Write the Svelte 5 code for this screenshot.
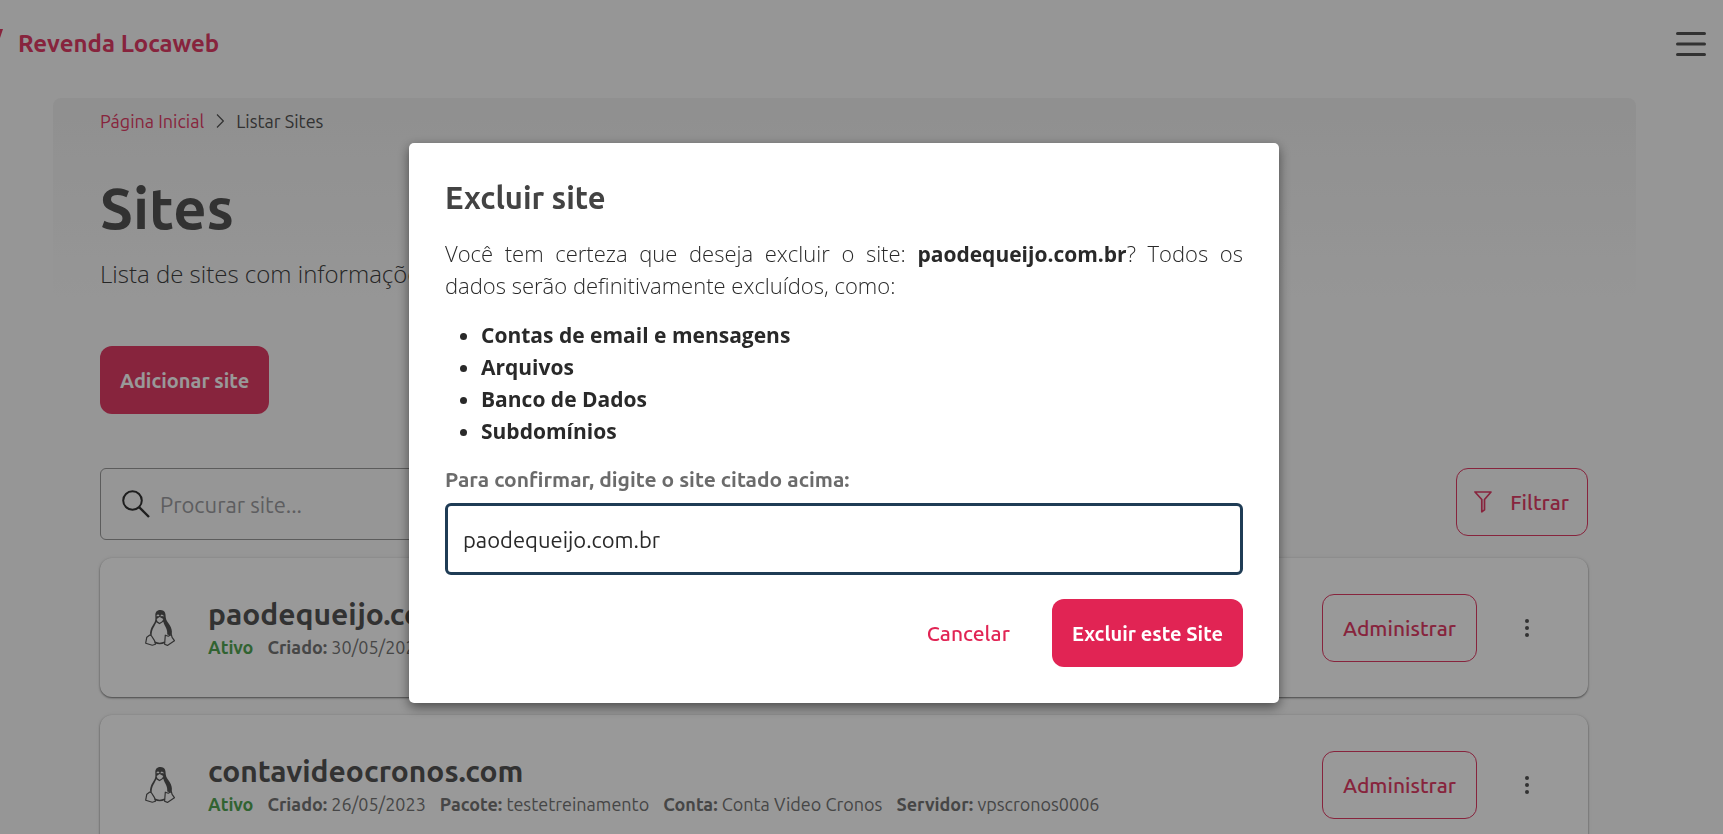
<script>
	let search = '';
	let confirmation = 'paodequeijo.com.br';
	let site_to_delete = 'paodequeijo.com.br';

	const deleted_items = ['Contas de email e mensagens', 'Arquivos', 'Banco de Dados', 'Subdomínios'];

	const sites = [
		{
			domain: 'paodequeijo.com.br',
			status: 'Ativo',
			info: [['Criado', '30/05/2023']]
		},
		{
			domain: 'contavideocronos.com',
			status: 'Ativo',
			info: [
				['Criado', '26/05/2023'],
				['Pacote', 'testetreinamento'],
				['Conta', 'Conta Video Cronos'],
				['Servidor', 'vpscronos0006']
			]
		}
	];
</script>

<div class="page">
	<header>
		<a class="brand" href="#home">
			<svg width="3" height="20" viewBox="0 0 3 20" aria-hidden="true">
				<path d="M0 0h3L0 9z" fill="currentColor" />
			</svg>
			<span>Revenda Locaweb</span>
		</a>
		<button class="menu" aria-label="Menu">
			<svg width="30" height="24" viewBox="0 0 30 24" aria-hidden="true">
				<path d="M1.5 1.5h27M1.5 12h27M1.5 22.500h27" stroke="currentColor" stroke-width="3" stroke-linecap="round" />
			</svg>
		</button>
	</header>

	<main>
		<nav class="breadcrumb" aria-label="breadcrumb">
			<a href="#home">Página Inicial</a>
			<svg width="8" height="14" viewBox="0 0 8 14" aria-hidden="true">
				<path d="M1 .5 7.300 7 1 13.500" fill="none" stroke="currentColor" stroke-width="1.200" />
			</svg>
			<span>Listar Sites</span>
		</nav>

		<h1>Sites</h1>
		<p class="subtitle">Lista de sites com informações</p>

		<button class="btn primary">Adicionar site</button>

		<div class="toolbar">
			<label class="search">
				<svg width="28" height="28" viewBox="0 0 28 28" aria-hidden="true">
					<g fill="none" stroke="currentColor" stroke-width="2">
						<circle cx="10.500" cy="10.500" r="9.300" />
						<path d="m17 17 10 10" stroke-width="2.400" />
					</g>
				</svg>
				<input type="text" placeholder="Procurar site..." aria-label="Procurar site" bind:value={search} />
			</label>
			<button class="btn outline filter">
				<svg width="18" height="22" viewBox="0 0 18 22" aria-hidden="true">
					<path d="M1 1h16l-6.500 7.500v10.300L7.800 20.800V8.500z" fill="none" stroke="currentColor" stroke-width="1.700" stroke-linejoin="round" />
				</svg>
				Filtrar
			</button>
		</div>

		{#each sites as site}
			<article class="card">
				<svg class="tux" width="30" height="36" viewBox="0 0 30 36" aria-hidden="true">
					<path
						d="M15.300 0C11.700 0 10.200 2.300 10.300 5.600c.1 2.700.3 4.500-.6 6.500-1.100 2.400-3.300 5-4.200 8.100-.5 1.700-.6 3-.4 4.500l1.600.9c-.1-3.400.6-5.800 1.900-8.200 1.300-2.300 2.100-3.600 2.600-5.200l3.300 2 3.800-2.400c.6 2.600 2 4.200 3 6.700.8 2.100 1.100 4 .9 6l2.500.7 2.100-1.200c.5-3.500-.4-6-2-8.800-1.700-3-3.700-4.500-4-7.400C20.500 4.300 20.700 0 15.300 0z"
						fill="currentColor"
					/>
					<path d="M12 6.200c.1-1.300 1.600-1.500 1.900 0M16 6.200c.2-1.500 2.200-1.300 2.100.2" fill="none" stroke="#fff" stroke-width="1.100" />
					<path d="m11.700 9 2.900-1.900L18.300 9l-1.200 2.300-2.500 1.400-2.300-1.400z" fill="#fff" />
					<g fill="#fff" stroke="currentColor" stroke-width="1.200" stroke-linejoin="round">
						<path d="M4.800 25 1.800 27.200.7 33.200l6.600 2 3.200-1-1-3.600-3.100-4.900z" />
						<path d="m20.300 25.200 3 1 3-1.700.8 2.900 2.300 3.300-7 4.700-2.800-1.100z" />
					</g>
					<path d="M9.800 32.300c2.900 1.500 6.800 1.500 10 0" fill="none" stroke="currentColor" stroke-width="1.600" />
				</svg>
				<div class="info">
					<h2>{site.domain}</h2>
					<div class="meta">
						<span class="status">{site.status}</span>
						{#each site.info as [name, value]}
							<span><strong>{name}:</strong> {value}</span>
						{/each}
					</div>
				</div>
				<button class="btn outline">Administrar</button>
				<button class="more" aria-label="Mais opções">
					<svg width="4" height="18" viewBox="0 0 4 18" fill="currentColor" aria-hidden="true">
						<circle cx="2" cy="2" r="2" />
						<circle cx="2" cy="9" r="2" />
						<circle cx="2" cy="16" r="2" />
					</svg>
				</button>
			</article>
		{/each}
	</main>
</div>

<div class="scrim">
	<div class="dialog" role="dialog" aria-modal="true" aria-labelledby="dialog_title">
		<h3 id="dialog_title">Excluir site</h3>
		<p>
			Você tem certeza que deseja excluir o site: <strong>{site_to_delete}</strong>? Todos os dados serão
			definitivamente excluídos, como:
		</p>
		<ul>
			{#each deleted_items as item}
				<li>{item}</li>
			{/each}
		</ul>
		<label for="confirmation">Para confirmar, digite o site citado acima:</label>
		<input id="confirmation" type="text" bind:value={confirmation} />
		<div class="actions">
			<button class="btn text">Cancelar</button>
			<button class="btn primary">Excluir este Site</button>
		</div>
	</div>
</div>

<style>
	:global(body) {
		background: #fafafa;
		overflow: hidden;
	}

	.page,
	.scrim {
		--pink: #e12454;
		font-family: Ubuntu, 'Noto Sans', sans-serif;
		font-size: 21px;
		box-sizing: border-box;
		height: 100vh;
		padding-right: 34px;
	}

	.page {
		--pink: #e23c66;
		color: #545454;
		overflow: hidden;
	}

	h1,
	h2,
	h3,
	p,
	ul {
		margin: 0;
	}

	button,
	input {
		font: inherit;
		color: inherit;
		box-sizing: border-box;
	}

	button {
		border: 0;
		background: none;
		padding: 0;
		cursor: pointer;
	}

	svg {
		display: block;
		flex: none;
	}

	header {
		display: flex;
		align-items: center;
		justify-content: space-between;
		height: 98px;
		padding-bottom: 10px;
		box-sizing: border-box;
		margin-right: -17px;
	}

	.brand {
		display: flex;
		gap: 15px;
		color: var(--pink);
		font-size: 24px;
		font-weight: 600;
		line-height: 30px;
		text-decoration: none;
	}

	main {
		margin: 0 53px;
		padding: 8px 48px 0 47px;
		border-radius: 8px;
		background: linear-gradient(#f0f0f0, #fafafa 200px);
	}

	.breadcrumb {
		display: flex;
		align-items: center;
		gap: 12px;
		height: 30px;
		font-size: 18px;
	}

	.breadcrumb a {
		color: var(--pink);
		text-decoration: none;
	}

	h1 {
		margin-top: 32px;
		font-size: 58px;
		font-weight: 600;
		line-height: 80px;
	}

	.subtitle {
		margin: 7px 0 53px;
		color: #404040;
		font-family: 'Open Sans', sans-serif;
		font-size: 24px;
		font-weight: 300;
		line-height: 38px;
	}

	.btn {
		height: 68px;
		padding: 0 20px;
		border-radius: 12px;
		font-weight: 500;
		white-space: nowrap;
	}

	.btn.primary {
		background: var(--pink);
		color: #fff;
		font-size: 20px;
		font-weight: 700;
	}

	.btn.outline {
		border: 1px solid var(--pink);
		color: var(--pink);
	}

	.btn.text {
		color: var(--pink);
	}

	.toolbar {
		display: flex;
		justify-content: space-between;
		align-items: flex-start;
		margin: 54px 0 18px;
	}

	.search {
		display: flex;
		align-items: center;
		gap: 8px;
		box-sizing: border-box;
		width: 50%;
		height: 72px;
		padding: 0 21px;
		border: 1px solid #999;
		border-radius: 6px;
		color: #333;
	}

	.search input {
		flex: 1;
		border: 0;
		outline: 0;
		background: none;
		font-size: 22px;
	}

	.search input::placeholder {
		color: #9c9ca0;
		opacity: 1;
	}

	.filter {
		display: flex;
		align-items: center;
		gap: 18px;
		padding: 0 18px 0 17px;
	}

	.card {
		display: flex;
		align-items: center;
		box-sizing: border-box;
		height: 139px;
		margin-bottom: 18px;
		padding: 0 59px 0 45px;
		border-radius: 12px;
		background: #fff;
		box-shadow: 0 1px 2px rgba(0, 0, 0, 0.5), 0 0 4px rgba(0, 0, 0, 0.08);
	}

	.info {
		flex: 1;
		margin-left: 33px;
	}

	h2 {
		font-size: 30px;
		font-weight: 600;
		line-height: 38px;
	}

	.meta {
		display: flex;
		gap: 14px;
		color: #757575;
		font-size: 18px;
		line-height: 28px;
	}

	.meta strong {
		font-weight: 600;
	}

	.status {
		color: #53a653;
		font-weight: 600;
	}

	.more {
		margin-left: 48px;
	}

	.scrim {
		position: fixed;
		inset: 0;
		display: flex;
		align-items: center;
		justify-content: center;
		padding-top: 12px;
		padding-right: 35px;
		background: rgba(0, 0, 0, 0.4);
	}

	.dialog {
		box-sizing: border-box;
		width: 870px;
		max-width: 90%;
		padding: 36px;
		border-radius: 5px;
		background: #fff;
		color: #292929;
		box-shadow: 0 4px 12px rgba(0, 0, 0, 0.5);
	}

	h3 {
		margin-bottom: 20px;
		color: #434343;
		font-size: 31px;
		font-weight: 700;
		line-height: 38px;
	}

	.dialog p,
	.dialog ul {
		font-family: 'Open Sans', sans-serif;
		line-height: 32px;
	}

	.dialog p {
		margin-bottom: 18px;
		font-size: 22px;
		font-weight: 300;
		text-align: justify;
	}

	.dialog strong {
		font-size: 21px;
		font-weight: 700;
		line-height: 1;
	}

	.dialog ul {
		margin-bottom: 16px;
		padding-left: 36px;
		font-weight: 700;
	}

	.dialog label {
		display: block;
		margin-bottom: 8px;
		color: #6b6b6b;
		font-weight: 600;
		line-height: 32px;
	}

	.dialog input {
		display: block;
		width: 100%;
		height: 72px;
		padding: 0 15px;
		border: 3px solid #1f3c55;
		border-radius: 6px;
		outline: 0;
		font-size: 22px;
	}

	.actions {
		display: flex;
		justify-content: flex-end;
		gap: 22px;
		margin-top: 24px;
	}
</style>
